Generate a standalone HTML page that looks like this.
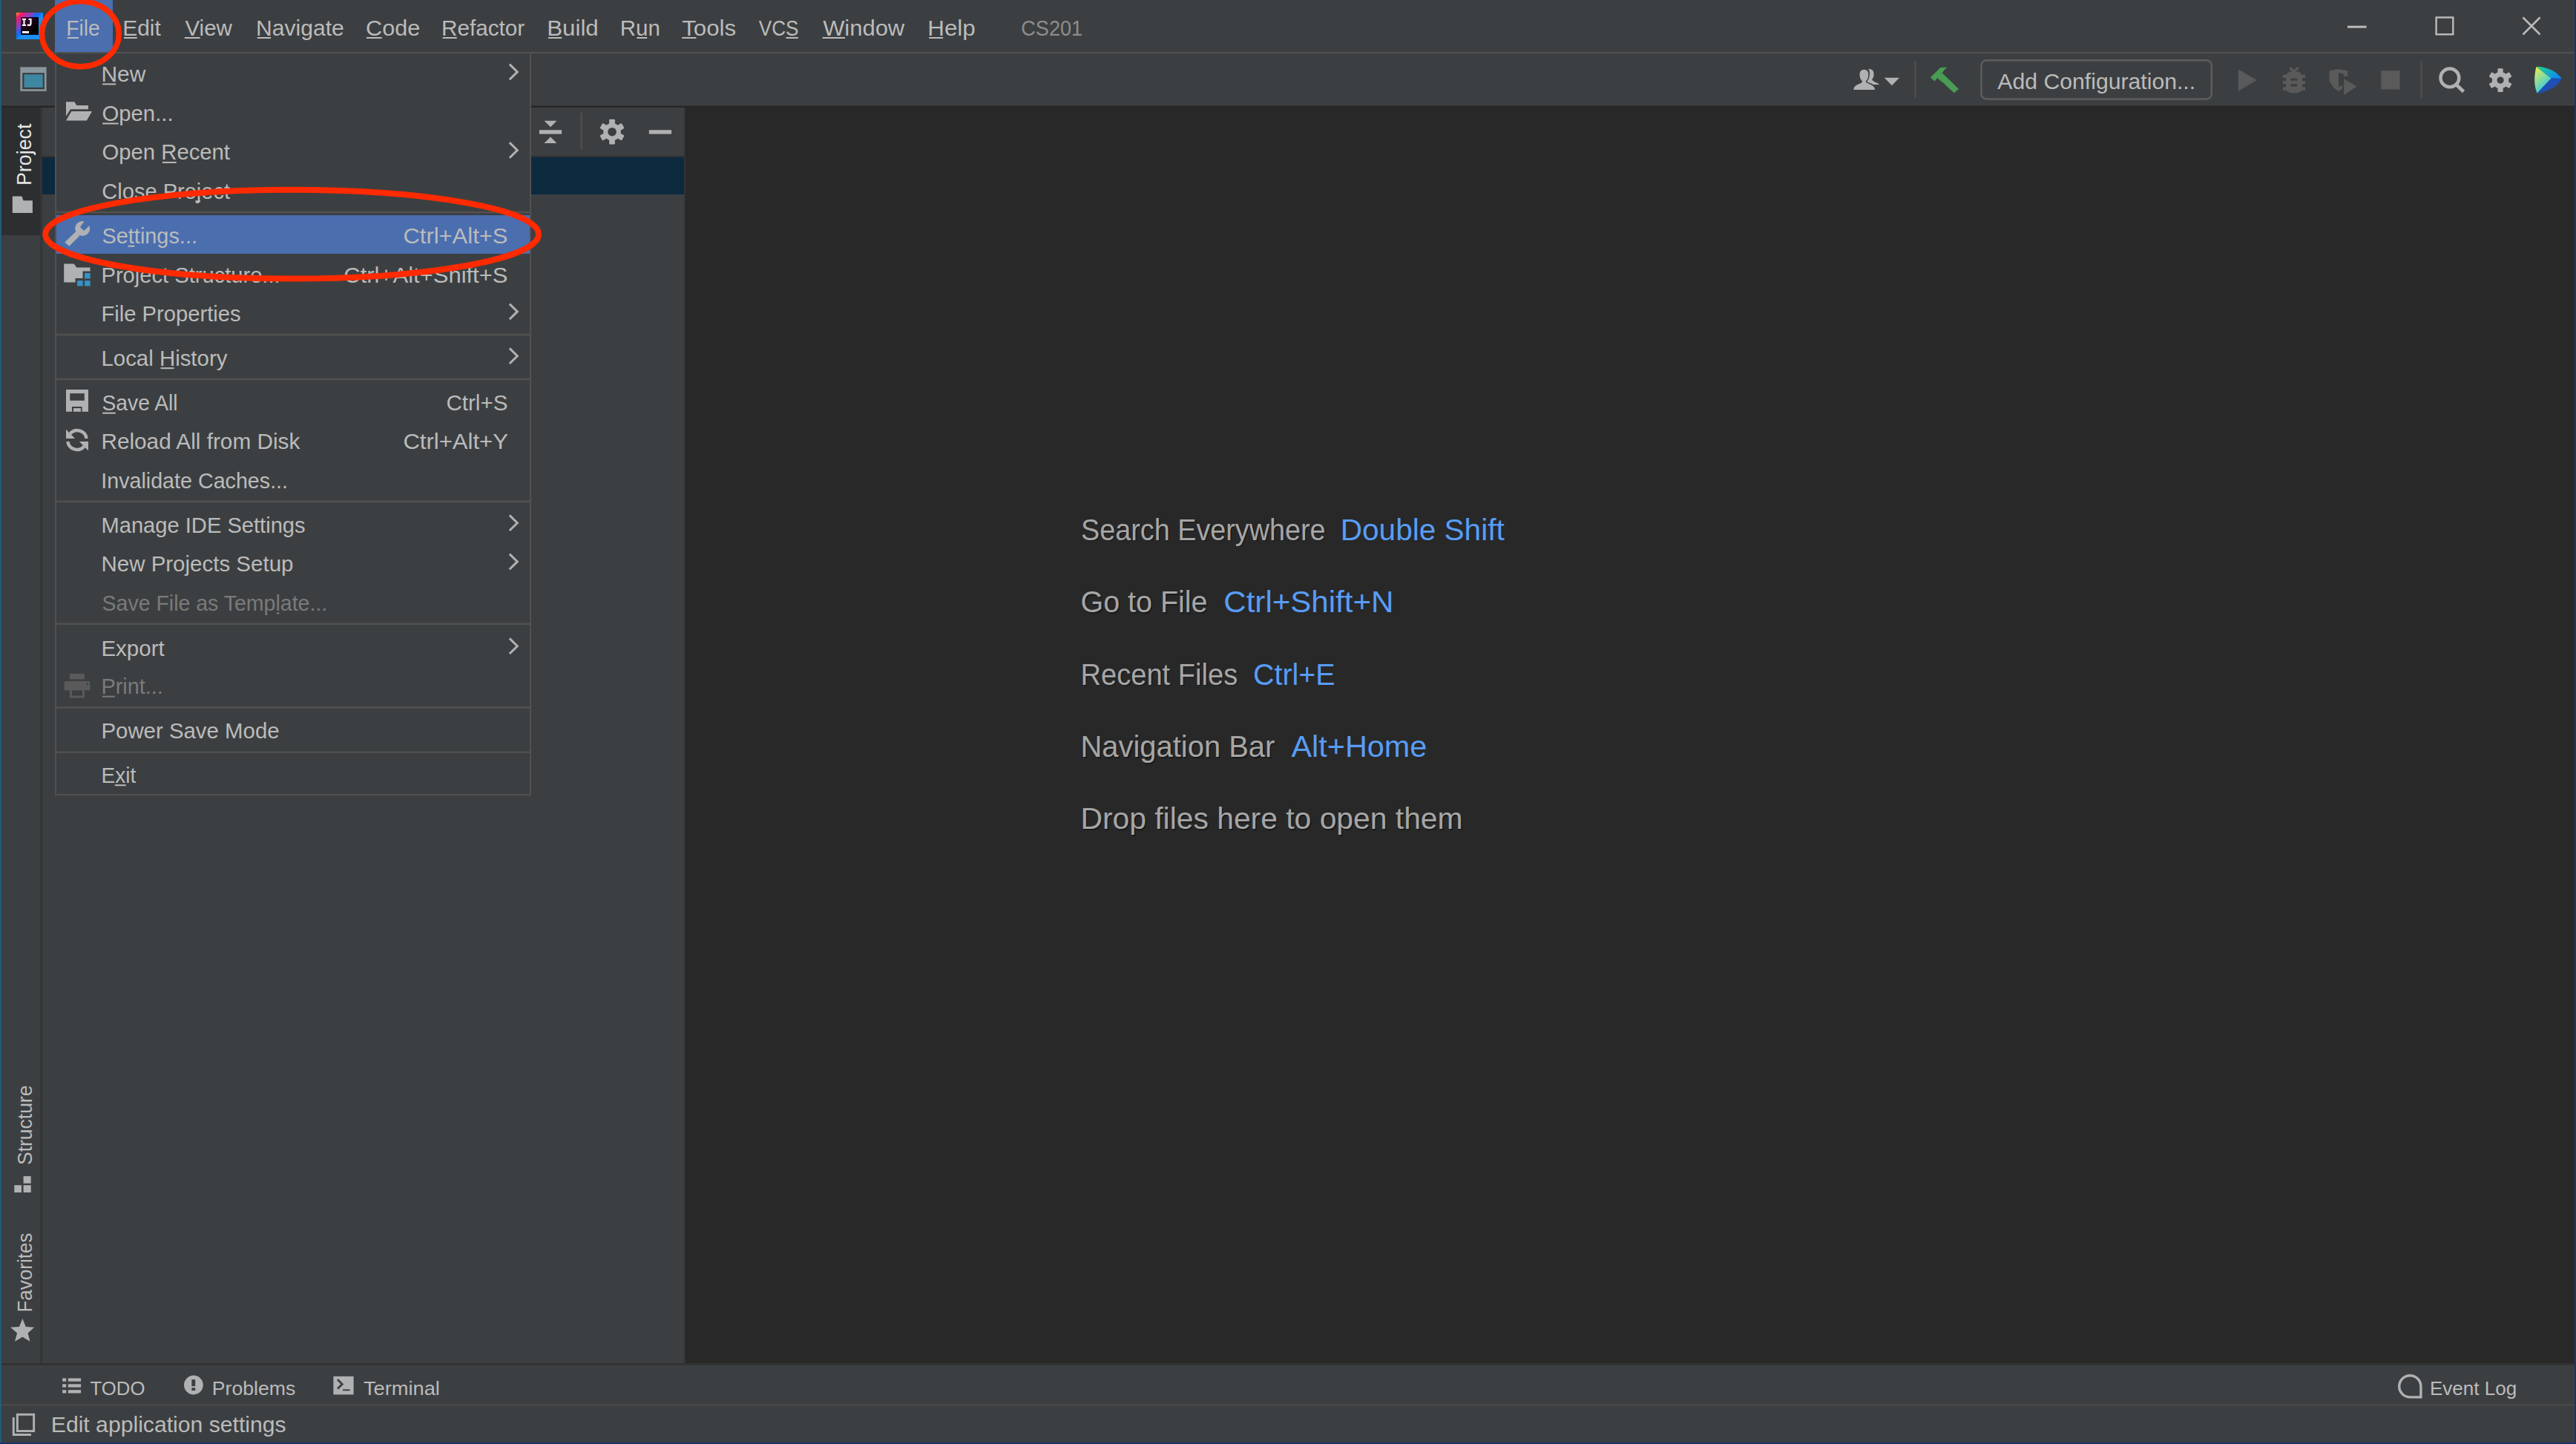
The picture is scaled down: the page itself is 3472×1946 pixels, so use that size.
<!DOCTYPE html>
<html><head><meta charset="utf-8"><title>IntelliJ IDEA - File menu</title>
<style>html,body{margin:0;padding:0;background:#3C3F41;overflow:hidden;width:3472px;height:1946px}
svg text{font-family:"Liberation Sans", sans-serif}</style></head>
<body>
<svg width="3472" height="1946" viewBox="0 0 3472 1946" style="display:block;font-family:'Liberation Sans', sans-serif"><rect x="0" y="0" width="3472" height="1946" fill="#3C3F41" />
<rect x="0" y="0" width="2" height="1946" fill="#1F5C7A" />
<rect x="3470" y="0" width="2" height="1946" fill="#1E3264" />
<rect x="0" y="1944" width="3472" height="2" fill="#1E3264" />
<rect x="2" y="70" width="3468" height="2" fill="#515151" />
<rect x="2" y="142.5" width="3468" height="2.5" fill="#262626" />
<rect x="54.5" y="145" width="2.5" height="1692" fill="#333333" />
<rect x="2" y="145" width="52.5" height="172" fill="#2D2E30" />
<rect x="57" y="210" width="865" height="2" fill="#323232" />
<rect x="57" y="212" width="865" height="50" fill="#0D293E" />
<rect x="922" y="145" width="2" height="1692" fill="#323232" />
<rect x="924" y="145" width="2546" height="1692" fill="#282828" />
<rect x="2" y="1837" width="3468" height="3" fill="#323232" />
<rect x="2" y="1892" width="3468" height="3" fill="#474747" />
<defs>
<linearGradient id="ijg" x1="0" y1="0" x2="0.55" y2="0.55">
<stop offset="0" stop-color="#FF9A1E"/><stop offset="0.22" stop-color="#F5146E"/><stop offset="0.5" stop-color="#9B3DB5"/><stop offset="0.8" stop-color="#0A6CFF"/><stop offset="1" stop-color="#1A90F5"/>
</linearGradient>
<linearGradient id="ijb" x1="0" y1="0" x2="1" y2="1"><stop offset="0" stop-color="#4A0A3C"/><stop offset="0.7" stop-color="#000"/></linearGradient>
<linearGradient id="tbY" x1="0" y1="0" x2="0.6" y2="1"><stop offset="0" stop-color="#F5F04A"/><stop offset="1" stop-color="#1EC8F0"/></linearGradient>
<linearGradient id="tbG" x1="0" y1="0" x2="1" y2="0.6"><stop offset="0" stop-color="#21D789"/><stop offset="1" stop-color="#0C8CF0"/></linearGradient>
</defs>
<rect x="22" y="17" width="36" height="36" fill="url(#ijg)" />
<rect x="28" y="23" width="24" height="24" fill="url(#ijb)" />
<rect x="30" y="25" width="5" height="2" fill="#FFF" />
<rect x="31.5" y="25" width="2.0" height="10" fill="#FFF" />
<rect x="30" y="33" width="5" height="2" fill="#FFF" />
<path d="M38.5 25 H42.6 V31.5 Q42.6 35.2 39.2 35.2 Q37 35.2 36.3 33.4 L38 32.3 Q38.4 33 39.1 33 Q40.4 33 40.4 31.3 V27 H38.5 Z" fill="#FFF"/>
<rect x="30" y="42" width="9" height="2.8" fill="#FFF" />
<rect x="27.3" y="90.4" width="35.3" height="32.5" fill="#8A969E" />
<rect x="30.2" y="98.2" width="29.6" height="22.0" fill="#3A3C3E" />
<rect x="32.5" y="100.3" width="25.2" height="17.6" fill="#3E87A2" />
<rect x="74" y="0" width="78" height="70" fill="#4B6EAF" />
<text x="89.24" y="47.50" font-size="29" fill="#BBBBBB" textLength="45.53" lengthAdjust="spacingAndGlyphs" >File</text>
<rect x="90.8" y="50" width="15.24" height="2" fill="#BBBBBB" />
<text x="165.31" y="47.50" font-size="29" fill="#BBBBBB" textLength="51.54" lengthAdjust="spacingAndGlyphs" >Edit</text>
<rect x="167.0" y="50" width="17.7" height="2" fill="#BBBBBB" />
<text x="249.45" y="47.50" font-size="29" fill="#BBBBBB" textLength="63.43" lengthAdjust="spacingAndGlyphs" >View</text>
<rect x="248.9" y="50" width="20.73" height="2" fill="#BBBBBB" />
<text x="345.09" y="47.50" font-size="29" fill="#BBBBBB" textLength="118.77" lengthAdjust="spacingAndGlyphs" >Navigate</text>
<rect x="346.8" y="50" width="18.25" height="2" fill="#BBBBBB" />
<text x="493.07" y="47.50" font-size="29" fill="#BBBBBB" textLength="73.07" lengthAdjust="spacingAndGlyphs" >Code</text>
<rect x="493.9" y="50" width="20.81" height="2" fill="#BBBBBB" />
<text x="595.03" y="47.50" font-size="29" fill="#BBBBBB" textLength="112.05" lengthAdjust="spacingAndGlyphs" >Refactor</text>
<rect x="596.7" y="50" width="19.04" height="2" fill="#BBBBBB" />
<text x="737.30" y="47.50" font-size="29" fill="#BBBBBB" textLength="69.39" lengthAdjust="spacingAndGlyphs" >Build</text>
<rect x="739.1" y="50" width="18.09" height="2" fill="#BBBBBB" />
<text x="835.85" y="47.50" font-size="29" fill="#BBBBBB" textLength="53.95" lengthAdjust="spacingAndGlyphs" >Run</text>
<rect x="858.3" y="50" width="13.9" height="2" fill="#BBBBBB" />
<text x="919.28" y="47.50" font-size="29" fill="#BBBBBB" textLength="72.80" lengthAdjust="spacingAndGlyphs" >Tools</text>
<rect x="919.2" y="50" width="19.18" height="2" fill="#BBBBBB" />
<text x="1022.87" y="47.50" font-size="29" fill="#BBBBBB" textLength="53.53" lengthAdjust="spacingAndGlyphs" >VCS</text>
<rect x="1059.51" y="50" width="16.37" height="2" fill="#BBBBBB" />
<text x="1109.15" y="47.50" font-size="29" fill="#BBBBBB" textLength="110.05" lengthAdjust="spacingAndGlyphs" >Window</text>
<rect x="1108.6" y="50" width="30.33" height="2" fill="#BBBBBB" />
<text x="1250.29" y="47.50" font-size="29" fill="#BBBBBB" textLength="64.41" lengthAdjust="spacingAndGlyphs" >Help</text>
<rect x="1252.1" y="50" width="18.94" height="2" fill="#BBBBBB" />
<text x="1376.25" y="47.50" font-size="29" fill="#8C8C8C" textLength="82.85" lengthAdjust="spacingAndGlyphs" >CS201</text>
<rect x="3164" y="34.7" width="25.6" height="3.0" fill="#BBBBBB" />
<rect x="3283.6" y="23.5" width="22.7" height="22.8" fill="none" stroke="#BBBBBB" stroke-width="2.4"/>
<path d="M3400.5 23.5 L3423.5 46.5 M3423.5 23.5 L3400.5 46.5" stroke="#BBBBBB" stroke-width="2.5"/>
<g fill="#AFB1B3" transform="translate(2480,76)"><path d="M38 17 Q45 16 45.6 23 Q45.8 28 43 31 Q44 33.5 48 35 Q52.5 36.5 52.8 38 H37.5 Q36 33 37 31 Q40 28 40 22 Q40 18.5 38 17 Z"/><path d="M32.4 17 Q39 17 39 24.5 Q39 30.5 35.5 33.5 Q35.5 35 40 36.5 Q47.5 39 48 45.8 H17.5 Q17.5 39 25 36.5 Q29.5 35 29.3 33.5 Q25.8 30.5 25.8 24.5 Q25.8 17 32.4 17 Z" stroke="#3C3F41" stroke-width="1.4"/><polygon points="59.8,28.7 80,28.7 69.9,39.2"/></g>
<rect x="2580.5" y="82" width="2.0" height="50" fill="#515151" />
<g fill="#499C54" transform="translate(2480,76)"><polygon points="121.9,28.3 135.5,15.1 144.4,14.8 142,16.7 137.4,22.5 127.3,33.4"/><polygon points="131.5,26.6 137.5,22.3 146,30.3 160,43.9 153.7,49.3 140.9,37.3 132,30"/></g>
<rect x="2670.4" y="81.2" width="310.4" height="52.3" rx="7" fill="none" stroke="#5E5E5E" stroke-width="2.4"/>
<text x="2692.30" y="120.20" font-size="29" fill="#BBBBBB" textLength="266.84" lengthAdjust="spacingAndGlyphs" >Add Configuration...</text>
<polygon points="3016.90,93.40 3016.90,122.70 3041.80,108.10" fill="#5A5A5A" />
<g fill="#5A5A5A" transform="translate(3060,86)"><path d="M26.2 5 L32 10.5 L37.8 5" fill="none" stroke="#5A5A5A" stroke-width="3.2"/><path d="M25.5 10.5 H38.5 L43.1 15 V33 Q43.1 39.4 32 39.4 Q20.9 39.4 20.9 33 V15 Z"/><rect x="16.9" y="14.9" width="30.2" height="4"/><rect x="16.9" y="23.2" width="30.2" height="4.1"/><rect x="16.9" y="31.5" width="30.2" height="4.3"/><rect x="27.5" y="19.7" width="8.8" height="3" fill="#3C3F41"/><rect x="27.5" y="27.3" width="8.8" height="3.2" fill="#3C3F41"/><rect x="20.9" y="18.9" width="0" height="0"/></g>
<g fill="#5A5A5A" transform="translate(3060,86)"><polygon points="79.5,9.6 91.8,7.1 104.2,9.6 104.2,16.7 99.2,16.7 99.2,14.1 92.1,12.1 92.1,31.8 96.9,28.8 96.9,33.8 92.1,37.1 85.8,32.8 79.7,23.7"/><polygon points="99.2,20.2 99.2,41.9 116.6,30.5"/></g>
<rect x="3209.4" y="95.2" width="25.1" height="25.3" fill="#5A5A5A" />
<rect x="3262.5" y="81.5" width="2.0" height="50.5" fill="#515151" />
<circle cx="3301.9" cy="104.9" r="12.4" fill="none" stroke="#AFB1B3" stroke-width="4.4"/>
<path d="M3310 113.5 L3320.5 123.5" stroke="#AFB1B3" stroke-width="4.6"/>
<g fill="#AFB1B3"><circle cx="3370.1" cy="108.1" r="11.2"/><rect x="3366.50" y="92.30" width="7.20" height="31.60" rx="1" transform="rotate(0.0 3370.1 108.1)"/><rect x="3366.50" y="92.30" width="7.20" height="31.60" rx="1" transform="rotate(60.0 3370.1 108.1)"/><rect x="3366.50" y="92.30" width="7.20" height="31.60" rx="1" transform="rotate(120.0 3370.1 108.1)"/></g>
<circle cx="3370.1" cy="108.1" r="4.6" fill="#3C3F41"/>
<g transform="translate(3000,76)"><path d="M418.5 14 Q420 13.5 424 14 Q444 17 452.5 30 L438.5 29.5 Z" fill="url(#tbG)"/><path d="M452.5 30 Q446 44 422 49.8 Q420 50 419.5 49.5 L438.5 29.5 Z" fill="#1F4FB5"/><path d="M418.5 14 L438.5 29.5 L419.5 49.5 Q415.5 40 416.3 28 Q417 19 418.5 14 Z" fill="url(#tbY)"/></g>
<text transform="translate(42.40,249.94) rotate(-90)" x="0" y="0" font-size="27.5" fill="#E6E6E6" textLength="83.34" lengthAdjust="spacingAndGlyphs">Project</text>
<path d="M16.8 264.6 H29.5 L31.5 270.2 H43.9 V287 H16.8 Z" fill="#AFB1B3"/>
<text transform="translate(42.50,1569.99) rotate(-90)" x="0" y="0" font-size="27.5" fill="#BBBBBB" textLength="107.41" lengthAdjust="spacingAndGlyphs">Structure</text>
<rect x="31.6" y="1585.1" width="10.1" height="9.7" fill="#AFB1B3" />
<rect x="19.3" y="1597.2" width="9.7" height="9.8" fill="#AFB1B3" />
<rect x="31.6" y="1597.2" width="10.1" height="9.8" fill="#AFB1B3" />
<text transform="translate(42.50,1768.58) rotate(-90)" x="0" y="0" font-size="27.5" fill="#BBBBBB" textLength="107.06" lengthAdjust="spacingAndGlyphs">Favorites</text>
<polygon points="30.40,1777.00 34.70,1788.10 46.20,1788.80 37.50,1796.40 40.50,1807.80 30.40,1801.80 20.00,1807.80 23.10,1796.40 14.00,1788.80 25.90,1788.10" fill="#AFB1B3" />
<polygon points="733.50,162.75 750.50,162.75 742.00,171.30" fill="#AFB1B3" />
<rect x="726.9" y="175.2" width="30.2" height="5.4" fill="#AFB1B3" />
<polygon points="733.50,193.00 750.50,193.00 742.00,184.50" fill="#AFB1B3" />
<rect x="782.5" y="152" width="2.0" height="49.6" fill="#515151" />
<g fill="#AFB1B3"><circle cx="825" cy="177.7" r="11.8"/><rect x="821.10" y="160.80" width="7.80" height="33.80" rx="1" transform="rotate(0.0 825 177.7)"/><rect x="821.10" y="160.80" width="7.80" height="33.80" rx="1" transform="rotate(60.0 825 177.7)"/><rect x="821.10" y="160.80" width="7.80" height="33.80" rx="1" transform="rotate(120.0 825 177.7)"/></g>
<circle cx="825" cy="177.7" r="5.8" fill="#3C3F41"/>
<rect x="874.8" y="175.2" width="30.2" height="5.4" fill="#AFB1B3" />
<text x="1458.60" y="729.00" font-size="40.5" fill="#161616" textLength="329.46" lengthAdjust="spacingAndGlyphs" opacity="0.8">Search Everywhere</text>
<text x="1457.10" y="727.50" font-size="40.5" fill="#A6A6A6" textLength="329.46" lengthAdjust="spacingAndGlyphs" >Search Everywhere</text>
<text x="1806.76" y="727.50" font-size="40.5" fill="#589DF6" textLength="220.96" lengthAdjust="spacingAndGlyphs" >Double Shift</text>
<text x="1457.93" y="826.50" font-size="40.5" fill="#161616" textLength="171.15" lengthAdjust="spacingAndGlyphs" opacity="0.8">Go to File</text>
<text x="1456.43" y="825.00" font-size="40.5" fill="#A6A6A6" textLength="171.15" lengthAdjust="spacingAndGlyphs" >Go to File</text>
<text x="1649.30" y="825.00" font-size="40.5" fill="#589DF6" textLength="229.13" lengthAdjust="spacingAndGlyphs" >Ctrl+Shift+N</text>
<text x="1457.95" y="924.20" font-size="40.5" fill="#161616" textLength="211.80" lengthAdjust="spacingAndGlyphs" opacity="0.8">Recent Files</text>
<text x="1456.45" y="922.70" font-size="40.5" fill="#A6A6A6" textLength="211.80" lengthAdjust="spacingAndGlyphs" >Recent Files</text>
<text x="1689.03" y="922.70" font-size="40.5" fill="#589DF6" textLength="110.60" lengthAdjust="spacingAndGlyphs" >Ctrl+E</text>
<text x="1458.01" y="1021.60" font-size="40.5" fill="#161616" textLength="261.86" lengthAdjust="spacingAndGlyphs" opacity="0.8">Navigation Bar</text>
<text x="1456.51" y="1020.10" font-size="40.5" fill="#A6A6A6" textLength="261.86" lengthAdjust="spacingAndGlyphs" >Navigation Bar</text>
<text x="1740.50" y="1020.10" font-size="40.5" fill="#589DF6" textLength="182.80" lengthAdjust="spacingAndGlyphs" >Alt+Home</text>
<text x="1457.93" y="1118.90" font-size="40.5" fill="#161616" textLength="515.16" lengthAdjust="spacingAndGlyphs" opacity="0.8">Drop files here to open them</text>
<text x="1456.43" y="1117.40" font-size="40.5" fill="#A6A6A6" textLength="515.16" lengthAdjust="spacingAndGlyphs" >Drop files here to open them</text>
<rect x="84.1" y="1857.4" width="5.1" height="4.3" fill="#AFB1B3" />
<rect x="91.8" y="1857.4" width="17.3" height="4.3" fill="#AFB1B3" />
<rect x="84.1" y="1865.3" width="5.1" height="4.3" fill="#AFB1B3" />
<rect x="91.8" y="1865.3" width="17.3" height="4.3" fill="#AFB1B3" />
<rect x="84.1" y="1873.2" width="5.1" height="4.3" fill="#AFB1B3" />
<rect x="91.8" y="1873.2" width="17.3" height="4.3" fill="#AFB1B3" />
<text x="121.59" y="1880.00" font-size="26" fill="#BBBBBB" textLength="73.89" lengthAdjust="spacingAndGlyphs" >TODO</text>
<circle cx="260.9" cy="1866.5" r="12.9" fill="#AFB1B3"/>
<rect x="258.3" y="1859.1" width="4.9" height="9.0" fill="#3C3F41" />
<rect x="258.3" y="1870.2" width="4.9" height="3.8" fill="#3C3F41" />
<text x="285.87" y="1880.00" font-size="26" fill="#BBBBBB" textLength="112.33" lengthAdjust="spacingAndGlyphs" >Problems</text>
<rect x="449.4" y="1854.8" width="27.2" height="24.6" fill="#AFB1B3" />
<polyline points="455,1859 461.2,1865.4 455,1871.5" fill="none" stroke="#3C3F41" stroke-width="2.8"/>
<rect x="462.1" y="1872.3" width="9.4" height="2.0" fill="#3C3F41" />
<text x="489.96" y="1880.00" font-size="26" fill="#BBBBBB" textLength="102.92" lengthAdjust="spacingAndGlyphs" >Terminal</text>
<path d="M3233.7 1868.3 A14.6 14.6 0 1 1 3262.9 1868.3 V1882.9 H3248.3 A14.6 14.6 0 0 1 3233.7 1868.3 Z" fill="none" stroke="#AFB1B3" stroke-width="3.4"/>
<text x="3274.92" y="1880.00" font-size="26" fill="#BBBBBB" textLength="117.37" lengthAdjust="spacingAndGlyphs" >Event Log</text>
<rect x="23.35" y="1906.25" width="22.3" height="22.3" fill="none" stroke="#AFB1B3" stroke-width="2.9"/>
<path d="M18.25 1909.9 V1933.45 H42" fill="none" stroke="#AFB1B3" stroke-width="2.9"/>
<text x="68.79" y="1930.00" font-size="29" fill="#BBBBBB" textLength="316.81" lengthAdjust="spacingAndGlyphs" >Edit application settings</text>
<rect x="74" y="72" width="642" height="1000" fill="#3C3F41" />
<rect x="74" y="72" width="2" height="1000" fill="#515151" />
<rect x="714" y="72" width="2" height="1000" fill="#515151" />
<rect x="74" y="1070" width="642" height="2" fill="#515151" />
<rect x="76" y="284.75" width="638" height="2.5" fill="#515151" />
<rect x="76" y="449.75" width="638" height="2.5" fill="#515151" />
<rect x="76" y="509.75" width="638" height="2.5" fill="#515151" />
<rect x="76" y="674.55" width="638" height="2.5" fill="#515151" />
<rect x="76" y="839.55" width="638" height="2.5" fill="#515151" />
<rect x="76" y="952.25" width="638" height="2.5" fill="#515151" />
<rect x="76" y="1012.45" width="638" height="2.5" fill="#515151" />
<rect x="76" y="290" width="638" height="52" fill="#4B6EAF" />
<text x="136.41" y="109.90" font-size="29" fill="#BBBBBB" textLength="59.86" lengthAdjust="spacingAndGlyphs" >New</text>
<rect x="138.1" y="112.4" width="18.16" height="2.0" fill="#BBBBBB" />
<polyline points="686.8,86.60000000000001 697.3,96.9 686.8,107.2" fill="none" stroke="#AFB1B3" stroke-width="3"/>
<text x="137.48" y="163.00" font-size="29" fill="#BBBBBB" textLength="96.10" lengthAdjust="spacingAndGlyphs" >Open...</text>
<rect x="138.1" y="165.5" width="21.47" height="2.0" fill="#BBBBBB" />
<text x="137.48" y="215.40" font-size="29" fill="#BBBBBB" textLength="172.54" lengthAdjust="spacingAndGlyphs" >Open Recent</text>
<rect x="218.89" y="217.9" width="18.82" height="2.0" fill="#BBBBBB" />
<polyline points="686.8,192.1 697.3,202.4 686.8,212.70000000000002" fill="none" stroke="#AFB1B3" stroke-width="3"/>
<text x="137.35" y="267.70" font-size="29" fill="#BBBBBB" textLength="172.65" lengthAdjust="spacingAndGlyphs" >Close Project</text>
<rect x="263.4" y="270.2" width="6.63" height="2.0" fill="#BBBBBB" />
<text x="137.50" y="328.20" font-size="29" fill="#BBBBBB" textLength="128.45" lengthAdjust="spacingAndGlyphs" >Settings...</text>
<rect x="172.57" y="330.7" width="8.77" height="2.0" fill="#BBBBBB" />
<text x="136.47" y="380.50" font-size="29" fill="#BBBBBB" textLength="241.18" lengthAdjust="spacingAndGlyphs" >Project Structure...</text>
<text x="136.47" y="432.90" font-size="29" fill="#BBBBBB" textLength="188.11" lengthAdjust="spacingAndGlyphs" >File Properties</text>
<polyline points="686.8,409.59999999999997 697.3,419.9 686.8,430.2" fill="none" stroke="#AFB1B3" stroke-width="3"/>
<text x="136.45" y="492.70" font-size="29" fill="#BBBBBB" textLength="169.95" lengthAdjust="spacingAndGlyphs" >Local History</text>
<rect x="216.56" y="495.2" width="17.87" height="2.0" fill="#BBBBBB" />
<polyline points="686.8,469.4 697.3,479.7 686.8,490.0" fill="none" stroke="#AFB1B3" stroke-width="3"/>
<text x="137.53" y="553.20" font-size="29" fill="#BBBBBB" textLength="102.00" lengthAdjust="spacingAndGlyphs" >Save All</text>
<rect x="138.1" y="555.7" width="17.63" height="2.0" fill="#BBBBBB" />
<text x="136.42" y="605.00" font-size="29" fill="#BBBBBB" textLength="267.93" lengthAdjust="spacingAndGlyphs" >Reload All from Disk</text>
<text x="136.22" y="657.60" font-size="29" fill="#BBBBBB" textLength="251.84" lengthAdjust="spacingAndGlyphs" >Invalidate Caches...</text>
<text x="136.47" y="717.70" font-size="29" fill="#BBBBBB" textLength="275.15" lengthAdjust="spacingAndGlyphs" >Manage IDE Settings</text>
<polyline points="686.8,694.4000000000001 697.3,704.7 686.8,715.0" fill="none" stroke="#AFB1B3" stroke-width="3"/>
<text x="136.44" y="769.90" font-size="29" fill="#BBBBBB" textLength="259.00" lengthAdjust="spacingAndGlyphs" >New Projects Setup</text>
<polyline points="686.8,746.6 697.3,756.9 686.8,767.1999999999999" fill="none" stroke="#AFB1B3" stroke-width="3"/>
<text x="137.52" y="823.00" font-size="29" fill="#7A7A7A" textLength="303.65" lengthAdjust="spacingAndGlyphs" >Save File as Template...</text>
<rect x="372.61" y="825.5" width="3.97" height="2.0" fill="#7A7A7A" />
<text x="136.44" y="883.70" font-size="29" fill="#BBBBBB" textLength="85.26" lengthAdjust="spacingAndGlyphs" >Export</text>
<polyline points="686.8,860.4000000000001 697.3,870.7 686.8,881.0" fill="none" stroke="#AFB1B3" stroke-width="3"/>
<text x="136.49" y="935.20" font-size="29" fill="#7A7A7A" textLength="83.34" lengthAdjust="spacingAndGlyphs" >Print...</text>
<rect x="138.1" y="937.7" width="16.83" height="2.0" fill="#7A7A7A" />
<text x="136.45" y="994.70" font-size="29" fill="#BBBBBB" textLength="240.16" lengthAdjust="spacingAndGlyphs" >Power Save Mode</text>
<text x="136.56" y="1054.70" font-size="29" fill="#BBBBBB" textLength="46.63" lengthAdjust="spacingAndGlyphs" >Exit</text>
<rect x="154.8" y="1057.2" width="14.83" height="2.0" fill="#BBBBBB" />
<text x="543.45" y="328.20" font-size="29" fill="#BBBBBB" textLength="141.01" lengthAdjust="spacingAndGlyphs" >Ctrl+Alt+S</text>
<text x="463.35" y="380.50" font-size="29" fill="#BBBBBB" textLength="221.11" lengthAdjust="spacingAndGlyphs" >Ctrl+Alt+Shift+S</text>
<text x="601.52" y="553.20" font-size="29" fill="#BBBBBB" textLength="82.84" lengthAdjust="spacingAndGlyphs" >Ctrl+S</text>
<text x="543.45" y="605.00" font-size="29" fill="#BBBBBB" textLength="141.54" lengthAdjust="spacingAndGlyphs" >Ctrl+Alt+Y</text>
<polygon points="89.00,137.30 100.40,137.30 103.20,142.10 119.00,142.10 119.00,147.30 94.90,147.30 89.00,156.70" fill="#AFB1B3" />
<polygon points="96.30,150.10 124.00,150.10 116.90,162.50 89.00,162.50" fill="#AFB1B3" />
<g transform="translate(80,292)" fill="#AFB1B3"><circle cx="31.2" cy="15.9" r="10"/><polygon points="7.3,34.5 13.2,39.8 27.4,25.8 22.2,19.9"/><polygon points="34.6,4.5 28,14.2 33.4,19 43,9.5 40,4" fill="#4B6EAF"/></g>
<polygon points="86.20,355.40 99.70,355.40 103.20,360.40 121.50,360.40 121.50,365.40 111.50,365.40 111.50,375.10 101.50,375.10 101.50,380.50 86.20,380.50" fill="#AFB1B3" />
<rect x="114.1" y="368" width="7.6" height="7.5" fill="#3592C4" />
<rect x="104.1" y="378.1" width="7.6" height="7.4" fill="#3592C4" />
<rect x="114.1" y="378.1" width="7.6" height="7.4" fill="#3592C4" />
<rect x="89" y="525" width="30" height="29.8" fill="#AFB1B3" />
<rect x="94.2" y="530.2" width="19.6" height="9.6" fill="#3C3F41" />
<rect x="97" y="548" width="13.6" height="6.8" fill="#3C3F41" />
<rect x="99" y="550.1" width="9.9" height="4.7" fill="#AFB1B3" />
<g transform="translate(80,570)" fill="none" stroke="#AFB1B3" stroke-width="4.4"><path d="M36.7 21 A12.7 12.7 0 0 0 14.5 14.5"/><path d="M11.3 25 A12.7 12.7 0 0 0 33.5 31.5"/></g>
<polygon points="89.00,578.70 89.00,591.00 101.10,591.00" fill="#AFB1B3" />
<polygon points="119.00,594.90 119.00,607.20 106.80,594.90" fill="#AFB1B3" />
<rect x="94" y="908" width="19.9" height="7.4" fill="#5A5A5A" />
<path d="M86.6 930.3 V920 Q86.6 918 88.6 918 H119.4 Q121.4 918 121.4 920 V930.3 Z" fill="#5A5A5A"/>
<rect x="116.7" y="920.8" width="2.3" height="2.2" fill="#3C3F41" />
<rect x="94" y="929.6" width="19.9" height="10.9" fill="#5A5A5A" />
<rect x="97" y="930.5" width="14" height="7.1" fill="#3C3F41" />
<ellipse cx="108.4" cy="45.7" rx="51.85" ry="44" fill="none" stroke="#FF2A00" stroke-width="7.5"/>
<ellipse cx="393.6" cy="315.7" rx="332.4" ry="59.9" fill="none" stroke="#FF2A00" stroke-width="8"/></svg>
</body></html>
